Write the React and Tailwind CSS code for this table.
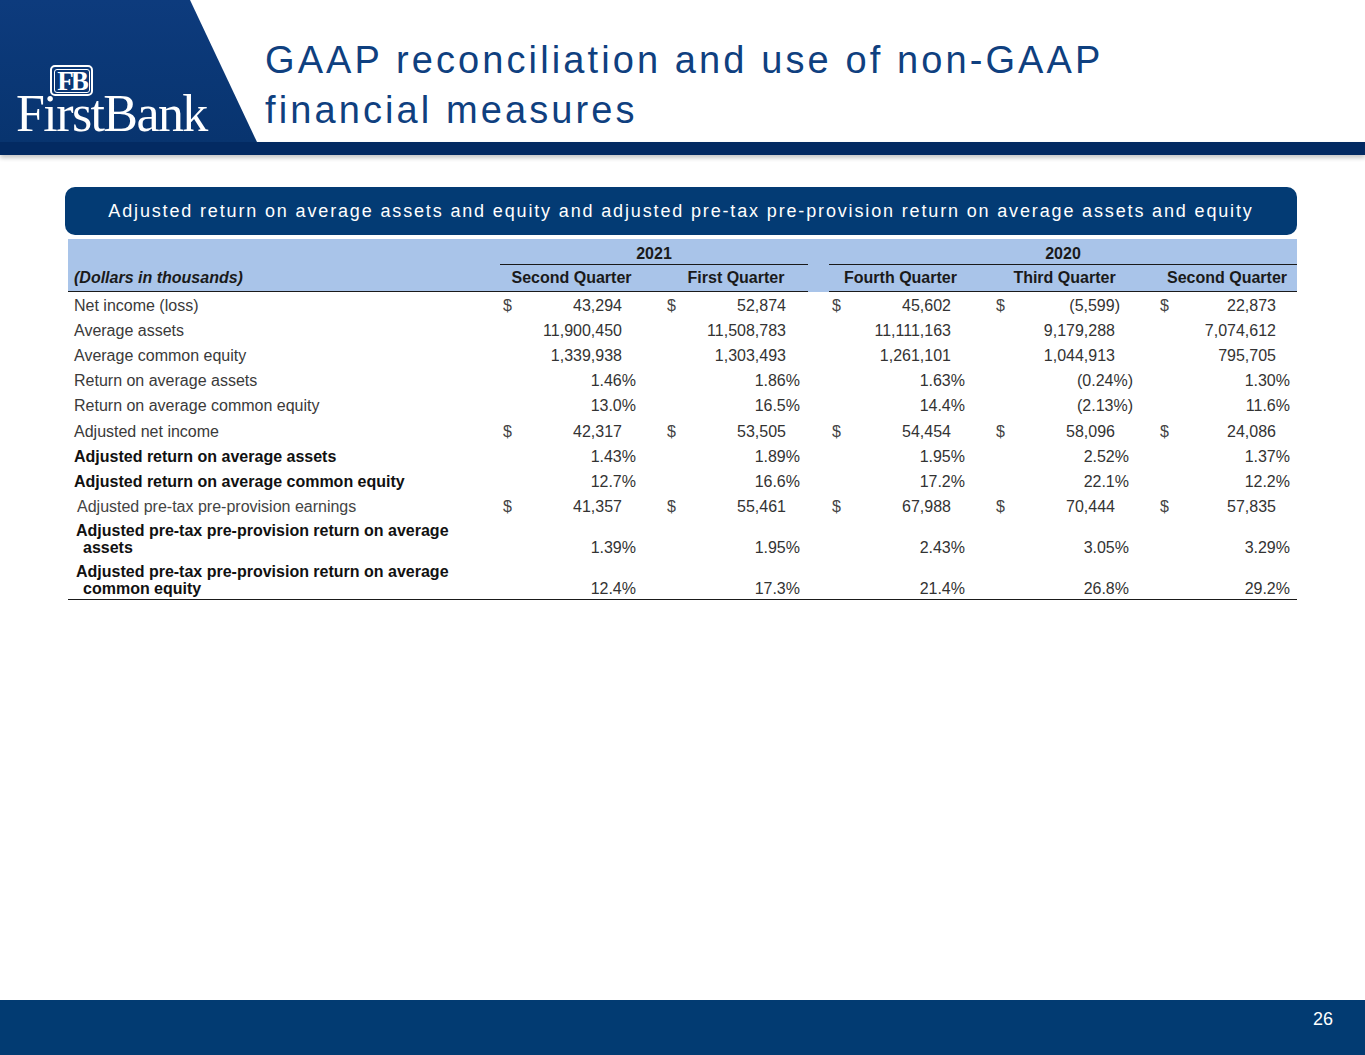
import React from 'react';

const colW = ['w-[164px]', 'w-[165px]', 'w-[164px]', 'w-[164px]', 'w-[140px]'];

const rows = [
    { label: 'Net income (loss)', dollar: true, vals: ['43,294', '52,874', '45,602', '(5,599)', '22,873'] },
    { label: 'Average assets', vals: ['11,900,450', '11,508,783', '11,111,163', '9,179,288', '7,074,612'] },
    { label: 'Average common equity', vals: ['1,339,938', '1,303,493', '1,261,101', '1,044,913', '795,705'] },
    { label: 'Return on average assets', vals: ['1.46%', '1.86%', '1.63%', '(0.24%)', '1.30%'] },
    { label: 'Return on average common equity', vals: ['13.0%', '16.5%', '14.4%', '(2.13%)', '11.6%'] },
    { label: 'Adjusted net income', dollar: true, vals: ['42,317', '53,505', '54,454', '58,096', '24,086'] },
    { label: 'Adjusted return on average assets', bold: true, vals: ['1.43%', '1.89%', '1.95%', '2.52%', '1.37%'] },
    { label: 'Adjusted return on average common equity', bold: true, vals: ['12.7%', '16.6%', '17.2%', '22.1%', '12.2%'] },
    { label: 'Adjusted pre-tax pre-provision earnings', dollar: true, indent: true, vals: ['41,357', '55,461', '67,988', '70,444', '57,835'] },
    { lines: ['Adjusted pre-tax pre-provision return on average', 'assets'], vals: ['1.39%', '1.95%', '2.43%', '3.05%', '3.29%'] },
    { lines: ['Adjusted pre-tax pre-provision return on average', 'common equity'], vals: ['12.4%', '17.3%', '21.4%', '26.8%', '29.2%'] },
];

function valuePad(v) {
    const neg = v.startsWith('(');
    const pct = v.includes('%');
    if (pct) return neg ? 'pr-[3px]' : 'pr-[7px]';
    return neg ? 'pr-[16px]' : 'pr-[21px]';
}

function ValueCells({ vals, dollar }) {
    return vals.map((v, i) => (
        <div key={i} className={`${colW[i]} shrink-0`}>
            <div className={`flex items-center justify-between ${i === 4 ? 'w-full' : 'w-[143px]'}`}>
                <span className="pl-[3px] text-[#444]">{dollar ? '$' : ''}</span>
                <span className={`${valuePad(v)} text-[#333]`}>{v}</span>
            </div>
        </div>
    ));
}

function Logo() {
    return (
        <div className="flex flex-col pl-[16px] pt-[65px]">
            <div className="ml-[34px] h-[31px] w-[43px] rounded-[5px] border-2 border-white p-[1.5px]">
                <div className="flex h-full w-full items-center justify-center rounded-[3px] border border-white">
                    <span className="font-['Liberation_Serif',serif] text-[27px] font-bold leading-[22px] tracking-[-3px] text-white">FB</span>
                </div>
            </div>
            <div className="font-['Liberation_Serif',serif] text-[52px] leading-[36px] tracking-[-1.6px] text-white">
                FirstBank
            </div>
        </div>
    );
}

export default function App() {
    return (
        <div className="relative flex h-[1055px] w-full flex-col overflow-hidden bg-white font-['Liberation_Sans',Arial,sans-serif]">
            <header className="shrink-0">
                <div className="flex h-[142px]">
                    <div className="w-[257px] shrink-0 bg-gradient-to-b from-[#0d3b7d] to-[#08346f] [clip-path:polygon(0_0,190px_0,100%_100%,0_100%)]">
                        <Logo />
                    </div>
                    <h1 className="pl-[8px] pt-[35px] text-[38px] font-normal leading-[50px] tracking-[3.1px] text-[#0f407f]">
                        GAAP reconciliation and use of non-GAAP
                        <br />
                        financial measures
                    </h1>
                </div>
                <div className="h-[13px] bg-[#032a62] shadow-[0_3px_4px_rgba(0,0,0,0.22)]" />
            </header>

            <main className="px-[65px] pt-[32px]">
                <div className="flex h-[48px] w-[1232px] items-center justify-center rounded-[10px] bg-[#033b74] text-[18px] tracking-[1.85px] text-white">
                    Adjusted return on average assets and equity and adjusted pre-tax pre-provision return on average assets and equity
                </div>

                <div className="ml-[3px] mt-[4px] w-[1229px] text-[16px] leading-none">
                    <div className="bg-[#a9c4e9] font-bold text-[#1a1a1a]">
                        <div className="flex h-[26px]">
                            <div className="w-[432px] shrink-0" />
                            <div className="flex w-[308px] shrink-0 items-center justify-center border-b-[1.5px] border-[#1a1a1a] pt-[5px]">2021</div>
                            <div className="w-[21px] shrink-0" />
                            <div className="flex flex-1 items-center justify-center border-b-[1.5px] border-[#1a1a1a] pt-[5px]">2020</div>
                        </div>
                        <div className="flex h-[27px]">
                            <div className="flex w-[740px] shrink-0 items-center border-b-[1.5px] border-[#1a1a1a]">
                                <div className="w-[432px] shrink-0 pl-[6px] italic">(Dollars in thousands)</div>
                                <div className="w-[143px] shrink-0 text-center">Second Quarter</div>
                                <div className="w-[21px] shrink-0" />
                                <div className="w-[144px] shrink-0 text-center">First Quarter</div>
                            </div>
                            <div className="w-[21px] shrink-0" />
                            <div className="flex flex-1 items-center border-b-[1.5px] border-[#1a1a1a]">
                                <div className="w-[143px] shrink-0 text-center">Fourth Quarter</div>
                                <div className="w-[21px] shrink-0" />
                                <div className="w-[143px] shrink-0 text-center">Third Quarter</div>
                                <div className="w-[21px] shrink-0" />
                                <div className="flex-1 text-center">Second Quarter</div>
                            </div>
                        </div>
                    </div>

                    <div className="border-b-[1.5px] border-[#1a1a1a] pt-[1px]">
                        {rows.map((row, idx) =>
                            row.lines ? (
                                <div key={idx} className={`flex items-end pb-[2px] ${idx === 9 ? 'h-[38px]' : 'h-[41px]'}`}>
                                    <div className="w-[432px] shrink-0 pl-[8px] font-bold leading-[17px] text-[#111]">
                                        <div>{row.lines[0]}</div>
                                        <div className="pl-[7px]">{row.lines[1]}</div>
                                    </div>
                                    <div className="flex leading-[17px]">
                                        <ValueCells vals={row.vals} dollar={row.dollar} />
                                    </div>
                                </div>
                            ) : (
                                <div key={idx} className="flex h-[25.2px] items-center">
                                    <div
                                        className={`w-[432px] shrink-0 ${row.bold ? 'pl-[6px] font-bold text-[#111]' : row.indent ? 'pl-[9px] text-[#444]' : 'pl-[6px] text-[#3a3a3a]'}`}
                                    >
                                        {row.label}
                                    </div>
                                    <ValueCells vals={row.vals} dollar={row.dollar} />
                                </div>
                            )
                        )}
                    </div>
                </div>
            </main>

            <footer className="mt-auto flex h-[55px] shrink-0 justify-end bg-[#023b72] pr-[32px] pt-[9px]">
                <span className="text-[18px] leading-[20px] text-white">26</span>
            </footer>
        </div>
    );
}
